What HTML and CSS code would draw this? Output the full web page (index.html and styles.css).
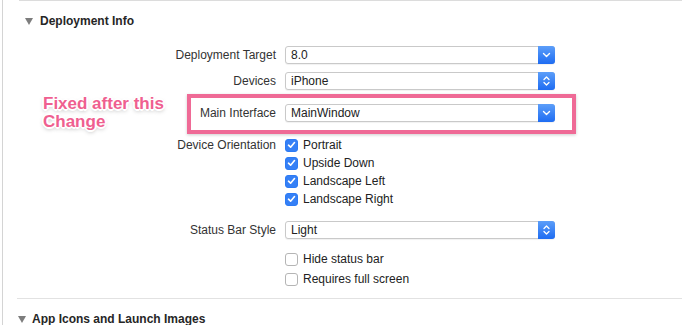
FILE: index.html
```html
<!DOCTYPE html>
<html>

<head>
    <title>Deployment Info</title>
    <link rel="stylesheet" href="styles.css">
</head>

<body>
    <div class="panel">
        <div class="top-line"></div>

        <div class="section-head">
            <span class="disclosure"></span>
            <span>Deployment Info</span>
        </div>

        <div class="row row-first">
            <label>Deployment Target</label>
            <div class="popup">
                <span>8.0</span>
                <span class="popup-btn">
                    <svg width="9" height="6" viewBox="0 0 9 6"><path d="M1.5 1.5 L4.5 4.5 L7.5 1.5" fill="none" stroke="#fff" stroke-width="1.4" stroke-linecap="round" stroke-linejoin="round"/></svg>
                </span>
            </div>
        </div>

        <div class="row row-devices">
            <label>Devices</label>
            <div class="popup">
                <span>iPhone</span>
                <span class="popup-btn">
                    <svg width="9" height="12" viewBox="0 0 9 12"><path d="M2 4.5 L4.5 2 L7 4.5 M2 7.5 L4.5 10 L7 7.5" fill="none" stroke="#fff" stroke-width="1.3" stroke-linecap="round" stroke-linejoin="round"/></svg>
                </span>
            </div>
        </div>

        <div class="row row-main">
            <label>Main Interface</label>
            <div class="popup">
                <span>MainWindow</span>
                <span class="popup-btn">
                    <svg width="9" height="6" viewBox="0 0 9 6"><path d="M1.5 1.5 L4.5 4.5 L7.5 1.5" fill="none" stroke="#fff" stroke-width="1.4" stroke-linecap="round" stroke-linejoin="round"/></svg>
                </span>
            </div>
        </div>

        <div class="row row-orient">
            <label>Device Orientation</label>
            <div class="check"><span class="box checked"><svg width="9" height="8" viewBox="0 0 9 8"><path d="M1.5 4.2 L3.6 6.2 L7.5 1.5" fill="none" stroke="#fff" stroke-width="1.6" stroke-linecap="round" stroke-linejoin="round"/></svg></span>Portrait</div>
        </div>
        <div class="row">
            <label></label>
            <div class="check"><span class="box checked"><svg width="9" height="8" viewBox="0 0 9 8"><path d="M1.5 4.2 L3.6 6.2 L7.5 1.5" fill="none" stroke="#fff" stroke-width="1.6" stroke-linecap="round" stroke-linejoin="round"/></svg></span>Upside Down</div>
        </div>
        <div class="row">
            <label></label>
            <div class="check"><span class="box checked"><svg width="9" height="8" viewBox="0 0 9 8"><path d="M1.5 4.2 L3.6 6.2 L7.5 1.5" fill="none" stroke="#fff" stroke-width="1.6" stroke-linecap="round" stroke-linejoin="round"/></svg></span>Landscape Left</div>
        </div>
        <div class="row">
            <label></label>
            <div class="check"><span class="box checked"><svg width="9" height="8" viewBox="0 0 9 8"><path d="M1.5 4.2 L3.6 6.2 L7.5 1.5" fill="none" stroke="#fff" stroke-width="1.6" stroke-linecap="round" stroke-linejoin="round"/></svg></span>Landscape Right</div>
        </div>

        <div class="row row-status">
            <label>Status Bar Style</label>
            <div class="popup">
                <span>Light</span>
                <span class="popup-btn">
                    <svg width="9" height="12" viewBox="0 0 9 12"><path d="M2 4.5 L4.5 2 L7 4.5 M2 7.5 L4.5 10 L7 7.5" fill="none" stroke="#fff" stroke-width="1.3" stroke-linecap="round" stroke-linejoin="round"/></svg>
                </span>
            </div>
        </div>

        <div class="row row-hide">
            <label></label>
            <div class="check"><span class="box"></span>Hide status bar</div>
        </div>
        <div class="row row-full">
            <label></label>
            <div class="check"><span class="box"></span>Requires full screen</div>
        </div>

        <div class="separator"></div>

        <div class="section-head section-next">
            <span class="disclosure"></span>
            <span>App Icons and Launch Images</span>
        </div>

        <!-- annotation drawn over the screenshot -->
        <div class="note-box"></div>
        <div class="note-text">Fixed after this<br>Change</div>
    </div>
</body>

</html>
```

FILE: styles.css
```css
body {
    margin: 0;
    background: #fff;
    font-family: "Liberation Sans", Arial, sans-serif;
    font-size: 12px;
    color: #2e2e2e;
    overflow: hidden;
}

.panel {
    position: relative;
    height: 325px;
    margin-left: 2px;
    border-left: 1px solid #d4d4d4;
    overflow: hidden;
}

.top-line {
    height: 1px;
    margin-left: 16px;
    background: #dcdcdc;
}

.section-head {
    display: flex;
    align-items: center;
    gap: 7px;
    height: 14px;
    margin-top: 13px;
    padding-left: 22px;
    font-weight: bold;
    color: #262626;
}

.disclosure {
    width: 0;
    height: 0;
    border-left: 4px solid transparent;
    border-right: 4px solid transparent;
    border-top: 7px solid #7d7d7d;
}

.section-next {
    margin-top: 13px;
    padding-left: 15px;
    gap: 6px;
}

.row {
    display: grid;
    grid-template-columns: 273px 270px;
    column-gap: 9px;
    align-items: center;
    height: 18px;
}

.row label {
    text-align: right;
    color: #333;
}

.row-first {
    margin-top: 18px;
}

.row-devices {
    margin-top: 8px;
}

.row-main {
    margin-top: 14px;
}

.row-orient {
    margin-top: 14px;
}

.row-status {
    margin-top: 13px;
}

.row-hide {
    margin-top: 11px;
}

.row-full {
    margin-top: 2px;
}

.popup {
    display: flex;
    align-items: center;
    justify-content: space-between;
    height: 18px;
    box-sizing: border-box;
    padding-left: 5px;
    border: 1px solid #c9c9c9;
    border-radius: 3px;
    background: #fff;
    box-shadow: 0 1px 1px rgba(0, 0, 0, 0.06);
    color: #222;
}

.popup-btn {
    display: flex;
    align-items: center;
    justify-content: center;
    width: 17px;
    height: 18px;
    margin: -1px -1px -1px 0;
    border-radius: 0 3px 3px 0;
    background: linear-gradient(#5c9ef9, #1e6cf2);
}

.check {
    display: flex;
    align-items: center;
    gap: 5px;
    color: #222;
}

.box {
    display: flex;
    align-items: center;
    justify-content: center;
    width: 13px;
    height: 13px;
    box-sizing: border-box;
    border: 1px solid #b5b5b5;
    border-radius: 3px;
    background: #fff;
}

.box.checked {
    border-color: #2d7bf4;
    background: #3580f6;
}

.separator {
    height: 1px;
    margin: 10px 0 0 14px;
    background: #e2e2e2;
}

.note-box {
    position: absolute;
    left: 184px;
    top: 94px;
    width: 389px;
    height: 40px;
    box-sizing: border-box;
    border: 4px solid #ef6a96;
    box-shadow: 0 1px 3px rgba(0, 0, 0, 0.2);
}

.note-text {
    position: absolute;
    left: 40px;
    top: 95px;
    font-size: 17px;
    line-height: 18px;
    font-weight: bold;
    color: #ef5f90;
    text-shadow: -2px 0 0 #fff, 2px 0 0 #fff, 0 -2px 0 #fff, 0 2px 0 #fff,
        -1px -1px 0 #fff, 1px -1px 0 #fff, -1px 1px 0 #fff, 1px 1px 0 #fff,
        0 2px 4px rgba(0, 0, 0, 0.35);
}
```
